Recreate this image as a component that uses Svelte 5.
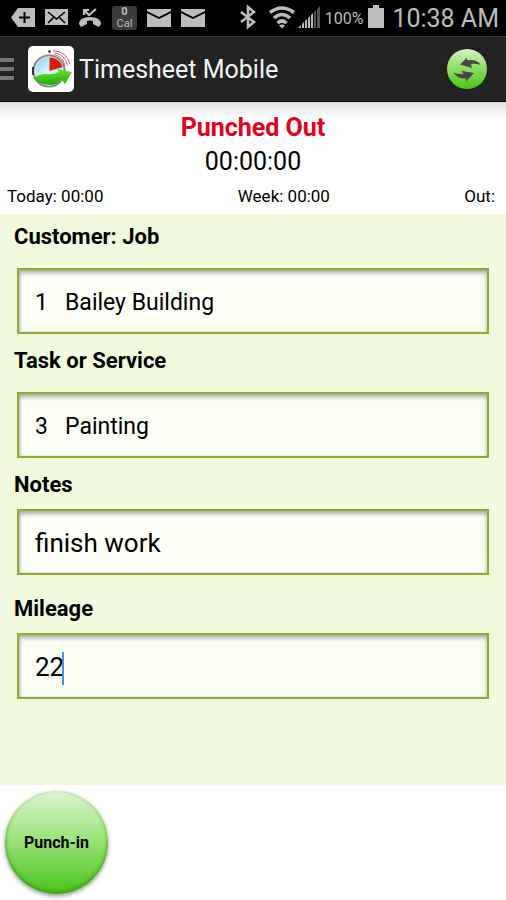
<script>
    let jobs = ["1\u00a0\u00a0\u00a0Bailey Building"];
    let tasks = ["3\u00a0\u00a0\u00a0Painting"];
    let job = jobs[0];
    let task = tasks[0];
    let notes = "finish work";
    let mileage = "22";
</script>

<div class="screen">
    <div class="status">
        <div class="side notices">
            <svg width="24" height="36" viewBox="0 0 24 36">
                <path fill="#bdbdbd" d="M7 8h17v19H7L0 17.500z" />
                <path stroke="#000" stroke-width="2" d="M8 17.500h11M13.500 12v11" />
            </svg>
            <svg width="23" height="36" viewBox="0 0 23 36">
                <path fill="#bdbdbd" d="M0 9h23v16H0z" />
                <path fill="none" stroke="#000" stroke-width="1.500" d="M3 12l8.500 7L20 12M3 23l6-6M20 23l-6-6" />
            </svg>
            <svg width="24" height="36" viewBox="0 0 24 36">
                <path fill="#bdbdbd" d="M1 24C1 20 5 17 12 17s11 3 11 7l-2 3-6-3v-3q-3-1-6 0v3l-6 3z" />
                <path fill="none" stroke="#bdbdbd" stroke-width="2.200" d="M6 15V10h5M6 10l5 5 7-6" />
            </svg>
            <div class="cal"><b>0</b><span>Cal</span></div>
            {#each [1, 2] as mail}
                <svg width="24" height="36" viewBox="0 0 24 36">
                    <path fill="#bdbdbd" d="M0 9h24v2l-12 6L0 11zM0 13l12 6 12-6v14H0z" />
                </svg>
            {/each}
        </div>
        <div class="side system">
            <svg width="16" height="36" viewBox="0 0 16 36">
                <path fill="none" stroke="#bdbdbd" stroke-width="2.600" d="M1 12l13 10-6 5V7l6 5L1 22" />
            </svg>
            <svg class="wifi" width="26" height="36" viewBox="0 0 26 36">
                <g fill="none" stroke="#bdbdbd" stroke-width="3.600">
                    <path d="M1 12.500q12-9 24 0" />
                    <path d="M5 18q8-7 16 0" />
                    <path d="M8.500 23q4.500-4 9 0" />
                </g>
                <path fill="#bdbdbd" d="M13 28.500l-3-3q3-2 6 0z" />
            </svg>
            <svg class="signal" width="22" height="36" viewBox="0 0 22 36">
                <path fill="#bdbdbd" d="M0 28l3-3v3zM4 28v-4l2-2v6zM7 28v-7l2-2v9zM10 28V18l2-2v12zM13 28V15l2-2v15z" />
                <path fill="#555" d="M16 28V12l2-2v18zM19 28V9l3-3v22z" />
            </svg>
            <span class="percent">100%</span>
            <svg class="battery" width="16" height="36" viewBox="0 0 16 36">
                <path fill="#bdbdbd" d="M0 8h5V5h6v3h5v20H0z" />
            </svg>
            <span class="clock">10:38 AM</span>
        </div>
    </div>

    <header>
        <button class="menu" aria-label="Menu"><i></i><i></i><i></i></button>
        <svg width="46" height="46" viewBox="0 0 46 46">
            <defs>
                <linearGradient id="face" x1="0" y1="0" x2="1" y2="1">
                    <stop offset="0" stop-color="#62cdf2" />
                    <stop offset=".5" stop-color="#e2f7fd" />
                    <stop offset="1" stop-color="#79d4f5" />
                </linearGradient>
                <linearGradient id="arrow" x1="0" y1="0" x2="0" y2="1">
                    <stop offset="0" stop-color="#6be432" />
                    <stop offset="1" stop-color="#25a80b" />
                </linearGradient>
            </defs>
            <rect width="46" height="46" rx="5" fill="#fff" />
            <g fill="none" stroke="#e0606c">
                <path d="M26 8.500q9 2 11 11.500" />
                <path d="M26 6.500q11 2 13.500 13" />
                <path d="M25 4.500q14 1 17 14" />
            </g>
            <circle cx="21" cy="25" r="15.500" fill="url(#face)" stroke="#858585" stroke-width="2" />
            <circle cx="21" cy="25" r="14" fill="none" stroke="#e4e4e4" stroke-width="1.200" />
            <path fill="#d91c0e" d="M21.500 25V11.500q10 0 13 9.500z" />
            <path d="M5 21v8" stroke="#333" stroke-width="2" />
            <circle cx="21.500" cy="5.500" r="1.300" fill="#222" />
            <path fill="url(#arrow)" d="M5 32q7-4 13-4 7 1 13-2l-2-3 15 3-7 12-3-4q-5 5-12 5-11 0-17-7z" />
        </svg>
        <h1>Timesheet Mobile</h1>
        <button class="sync" aria-label="Sync">
            <svg width="40" height="40" viewBox="0 0 40 40">
                <path fill="#484848" d="M13 15.500l7-7v2.800q10-1.500 13.500 4.700-5-2-9.500-1l1 4z" />
                <path fill="#484848" d="M27 24l-8 8.500v-3q-9 .500-12.500-6 5 2 10 1.500l-2-3z" />
            </svg>
        </button>
    </header>

    <section class="summary">
        <h2>Punched Out</h2>
        <div class="timer">00:00:00</div>
        <div class="totals">
            <span>Today: 00:00</span>
            <span>Week: 00:00</span>
            <span>Out:</span>
        </div>
    </section>

    <form>
        <div class="field">
            <label for="job">Customer: Job</label>
            <select id="job" bind:value={job}>
                {#each jobs as item}
                    <option>{item}</option>
                {/each}
            </select>
        </div>
        <div class="field">
            <label for="task">Task or Service</label>
            <select id="task" bind:value={task}>
                {#each tasks as item}
                    <option>{item}</option>
                {/each}
            </select>
        </div>
        <div class="field text">
            <label for="notes">Notes</label>
            <input id="notes" type="text" bind:value={notes} />
        </div>
        <div class="field text">
            <label for="mileage">Mileage</label>
            <div class="editing">
                <input id="mileage" type="text" inputmode="numeric" bind:value={mileage} />
                <span class="caret" style="--typed: {mileage.length}"></span>
            </div>
        </div>
    </form>

    <footer>
        <button class="punch">Punch-in</button>
    </footer>
</div>

<style>
    :global(body) {
        margin: 0;
        background: #fff;
    }

    .screen {
        display: flex;
        flex-direction: column;
        min-height: 100vh;
        font-family: Roboto, "Noto Sans", sans-serif;
        color: #000;
    }

    button {
        padding: 0;
        border: none;
        font-family: inherit;
        cursor: pointer;
    }

    svg {
        display: block;
        flex: none;
    }

    .status {
        display: flex;
        justify-content: space-between;
        height: 36px;
        padding: 0 7px 0 11px;
        background: #000;
        color: #bdbdbd;
    }

    .side {
        display: flex;
        align-items: center;
    }

    .notices {
        gap: 10px;
    }

    .cal {
        display: flex;
        flex-direction: column;
        align-items: center;
        width: 25px;
        height: 24px;
        border-radius: 3px;
        background: #3b3b3b;
        font-size: 11px;
        line-height: 12px;
    }

    .wifi {
        margin-left: 13px;
    }

    .signal {
        margin-left: 3px;
    }

    .percent {
        margin-left: 5px;
        font-size: 16px;
    }

    .battery {
        margin: 0 8px 0 5px;
    }

    .clock {
        font-size: 25px;
    }

    header {
        display: flex;
        align-items: center;
        height: 66px;
        box-sizing: border-box;
        padding-right: 19px;
        border-top: 1px solid #333;
        border-bottom: 1px solid #000;
        background: #222;
    }

    .menu {
        display: flex;
        flex-direction: column;
        gap: 5px;
        width: 14px;
        margin-right: 14px;
        background: none;
    }

    .menu i {
        height: 4px;
        background: #77777b;
    }

    h1 {
        flex: 1;
        margin: 0 0 0 5px;
        color: #f3f3f3;
        font-size: 25px;
        font-weight: 400;
    }

    .sync {
        width: 40px;
        height: 40px;
        border-radius: 50%;
        background: linear-gradient(#d8f2c8, #8add61 50%, #48c414);
    }

    .summary {
        height: 112px;
        box-sizing: border-box;
        padding-top: 9px;
        background: linear-gradient(#dedede, #fff 16px);
        text-align: center;
    }

    h2 {
        margin: 0;
        color: #e2001a;
        font-size: 25px;
        font-weight: 700;
        line-height: 34px;
    }

    .timer {
        font-size: 25px;
        line-height: 34px;
    }

    .totals {
        display: flex;
        justify-content: space-between;
        padding: 7px 11px 0 7px;
        font-size: 17px;
        line-height: 20px;
    }

    form {
        flex: 1;
        padding: 8px 17px 0;
        background: #f1fadc;
    }

    .field {
        height: 124px;
    }

    label {
        display: block;
        margin: 0 0 16px -3px;
        font-size: 22px;
        font-weight: 700;
        line-height: 30px;
    }

    .text label {
        margin-bottom: 9px;
    }

    select,
    input {
        display: block;
        width: 100%;
        height: 66px;
        box-sizing: border-box;
        margin: 0;
        padding: 2px 16px 0;
        border: 2px solid #8aae2c;
        border-radius: 0;
        outline: none;
        appearance: none;
        background: #fcfdf5;
        box-shadow: inset 0 3px 4px #aaa, inset 1px 0 2px #ccc;
        color: #000;
        font-family: inherit;
        font-size: 23px;
    }

    input {
        font-size: 26px;
    }

    .editing {
        position: relative;
        font-size: 26px;
    }

    .caret {
        position: absolute;
        top: 19px;
        left: calc(16px + var(--typed) * 1ch);
        width: 2px;
        height: 33px;
        background: #3d94ea;
    }

    footer {
        height: 115px;
        box-sizing: border-box;
        padding: 6px 5px;
        background: #fff;
    }

    .punch {
        width: 103px;
        height: 103px;
        border-radius: 50%;
        background: linear-gradient(#def3d1, #a5e786 40%, #4bc31c);
        box-shadow: 0 2px 4px #999, inset 0 -2px 4px #38a010;
        color: #000;
        font-size: 16px;
        font-weight: 700;
    }
</style>
